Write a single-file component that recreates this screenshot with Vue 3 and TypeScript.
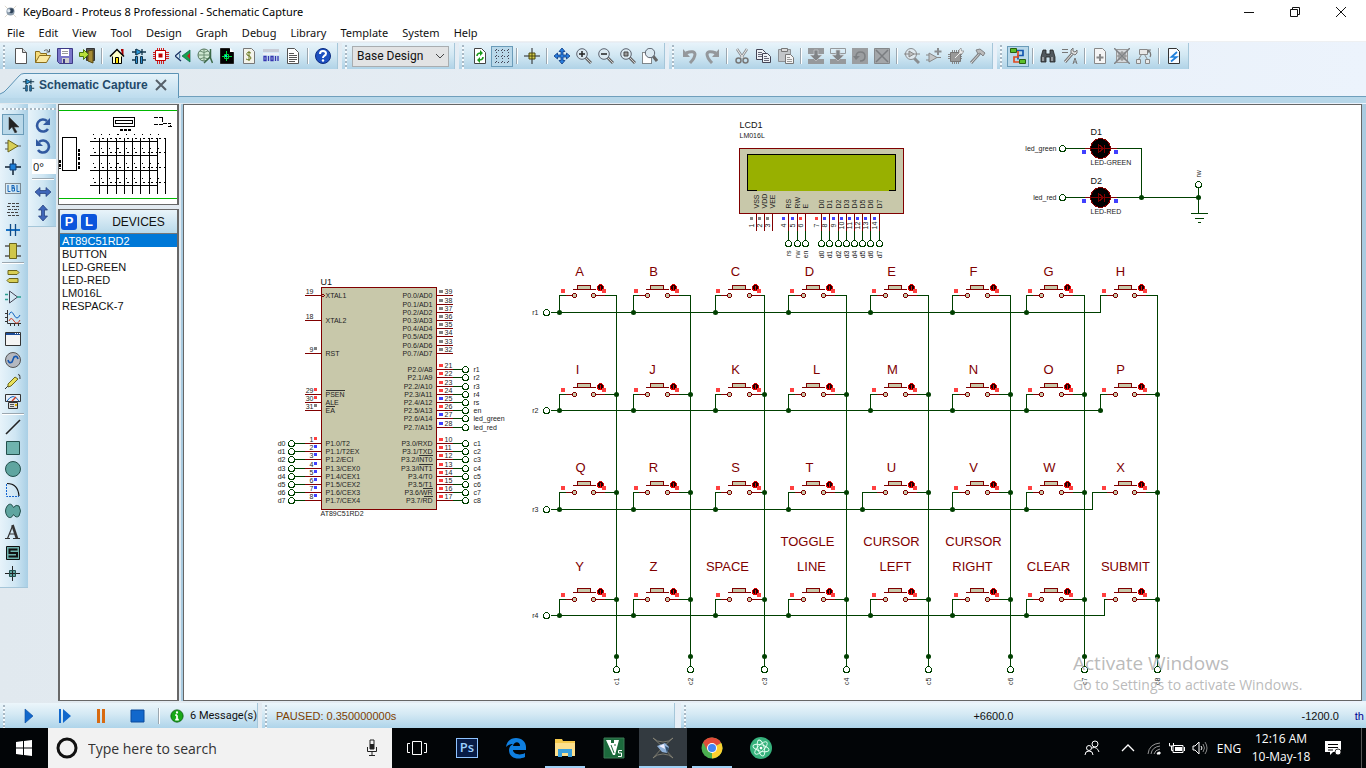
<script setup lang="ts">
import { ref } from 'vue'

type Tool = { id: string; label: string; on?: boolean } | 'sep'

const icons: Record<string, string> = {
  new: '<path d="M2.500 .5h7l4 4v11h-11z" fill="#fff" stroke="#555"/><path d="M9.500 .5v4h4" fill="#ddd" stroke="#555"/>',
  open: '<path d="M.5 14.500v-11h4l1 2h6v3" fill="#f6dc7a" stroke="#8a6d1c"/><path d="M.5 14.500l4-7h11l-4 7z" fill="#fbe9a0" stroke="#8a6d1c"/><path d="M9 3c2-2 4-1 5 1M14.500 1v3h-3" fill="none" stroke="#555"/>',
  save: '<path d="M.5 .5h15v15h-13l-2-2z" fill="#7a76c8" stroke="#3d3a86"/><path d="M4 1h8v7H4z" fill="#fff"/><path d="M5 3.500h6M5 5.500h6" stroke="#9a9a9a"/><path d="M5 10h7v5H5z" fill="#ccc"/><path d="M6 11h2v4H6z" fill="#3d3a86"/>',
  exit: '<path d="M7.500 .5h8v12h-8z" fill="#555" stroke="#333"/><path d="M9 3l5-1v13l-5-2z" fill="#a58b35" stroke="#54460f"/><path d="M.5 4.500h4V1.500l5 5-5 5V8.500h-4z" fill="#b8e03c" stroke="#4a7a12"/>',
  home: '<path d="M3.500 8v7.500h9V8" fill="#ffffc8" stroke="#000"/><path d="M12 2h1.500v5" stroke="#a00" stroke-width="2" fill="none"/><path d="M1 8.500l7-7 7 7" fill="#ffffc8" stroke="#000" stroke-width="1.500"/><path d="M6.500 9.500h3v6h-3z" fill="#ffe000" stroke="#000"/>',
  schem: '<path d="M1 4h14M5 1v6M11 1v6" stroke="#12354a" stroke-width="1.300"/><path d="M5 1l6 3-6 3z" fill="#2a9bdc" stroke="#12354a"/><path d="M1 12h3M12 12h3" stroke="#12354a" stroke-width="1.300"/><path d="M4.500 8.500h2v7h-2zM9.500 8.500h2v7h-2z" fill="#2a8bd0" stroke="#12354a"/>',
  chip: '<path d="M4.500 0v16M6.500 0v16M8.500 0v16M10.500 0v16M0 4.500h16M0 6.500h16M0 8.500h16M0 10.500h16" stroke="#d02020"/><path d="M2.500 2.500h10v10h-10z" fill="#fff" stroke="#c00000"/><path d="M5.500 5.500h4v4h-4z" fill="#c00000"/>',
  view3d: '<path d="M15 2v12L7 8z" fill="#18a050" stroke="#064" stroke-width=".7"/><path d="M15 5v6l-3-3z" fill="#c02020"/><path d="M0 8l6-5M0 8l6 5" stroke="#1a2f60" stroke-width="1.300" fill="none"/><path d="M4 4.500q3 3.500 0 7z" fill="#5585aa"/>',
  globe: '<circle cx="7" cy="7" r="6" fill="#cfe8d2" stroke="#52735a"/><path d="M7 1v12M1 7h12M3 3q4 3 8 0M3 11q4-3 8 0" fill="none" stroke="#6c8f74"/><path d="M13.500 1v9l2 5M13 9l-6 6" stroke="#3c6a48" stroke-width="1.500" fill="none"/>',
  gerber: '<path d="M1.500 .5h9l4 4v11h-13z" fill="#000" stroke="#222"/><path d="M11 0v4h4z" fill="#fff"/><path d="M7.500 3v10M3 8.500h10M5.500 6.500h4v4h-4z" stroke="#00d840" fill="none"/><path d="M6 7h2v2H6z" fill="#00e0e0"/>',
  bill: '<path d="M2.500 .5h8l3 3v12h-11z" fill="#f3f3ea" stroke="#777"/><path d="M10 5Q5 3 6 7q4 1 4 3-1 3-5 1M8 3v10" fill="none" stroke="#6a7a20"/>',
  bits: '<path d="M0 1h16v3H0z" fill="#c8ccd6"/><path d="M0 5h16v2H0z" fill="#eef0f6"/><path d="M1 8.500h2v4H1zM5.500 13V8M8 8.500h2v4H8zM12.500 13V8M15 8v5" fill="none" stroke="#3434b0" stroke-width="1.300"/>',
  doc: '<path d="M2.500 .5h7l4 4v11h-11z" fill="#fff" stroke="#555"/><path d="M4 5.500h5M4 7.500h8M4 9.500h8M4 11.500h8M4 13.500h6" stroke="#555"/>',
  help: '<circle cx="8" cy="8" r="7.500" fill="#1e50c0" stroke="#0c2c80"/><path d="M5 6q0-3 3-3t3 2.500q0 1.500-2 2.500-1 .6-1 2" fill="none" stroke="#fff" stroke-width="2"/><circle cx="8" cy="12.500" r="1.200" fill="#fff"/>',
  refresh: '<path d="M2.500 .5h7l4 4v11h-11z" fill="#fff" stroke="#444"/><path d="M5 8q0-3 4-3M11 9q0 3-4 3" fill="none" stroke="#1a9a1a" stroke-width="1.600"/><path d="M8 2l3 3-3 3zM8 9l-3 3 3 3z" fill="#1a9a1a"/>',
  grid: '<path d="M1 2.500h15M1 8.500h15M1 14.500h15M2.500 1v15M8.500 1v15M14.500 1v15" stroke="#445" stroke-dasharray="1 2"/>',
  origin: '<path d="M8 0v16M0 8h16" stroke="#222"/><path d="M5 5h6v6H5z" fill="#d4cc4a" stroke="#4a4610"/><path d="M8 5v6M5 8h6" stroke="#4a4610"/>',
  pan: '<path d="M8 0l3 3.500H9V7h3.500V5L16 8l-3.500 3V9H9v3.500h2L8 16l-3-3.500h2V9H3.500v2L0 8l3.500-3v2H7V3.500H5z" fill="#2a7fe0" stroke="#0a3880" stroke-width=".8"/>',
  zin: '<path d="M9 9l6 6" stroke="#666" stroke-width="3"/><path d="M9 9l6 6" stroke="#ccc"/><circle cx="6" cy="6" r="5.300" fill="#dbe9f1" stroke="#5c6470"/><path d="M3 6h6M6 3v6" stroke="#222" stroke-width="1.500"/>',
  zout: '<path d="M9 9l6 6" stroke="#666" stroke-width="3"/><path d="M9 9l6 6" stroke="#ccc"/><circle cx="6" cy="6" r="5.300" fill="#dbe9f1" stroke="#5c6470"/><path d="M3 6h6" stroke="#222" stroke-width="1.500"/>',
  zall: '<path d="M9 9l6 6" stroke="#666" stroke-width="3"/><path d="M9 9l6 6" stroke="#ccc"/><circle cx="6" cy="6" r="5.300" fill="#dbe9f1" stroke="#5c6470"/><path d="M4 4h4v4H4z" fill="#999" stroke="#444"/>',
  zarea: '<path d="M.5 4.500h9v11h-9z" fill="#fff" stroke="#222" stroke-dasharray="1 1"/><path d="M11 8l4 5" stroke="#666" stroke-width="3"/><circle cx="8" cy="5" r="4.700" fill="#dbe9f1" stroke="#5c6470"/>',
  undo: '<path d="M4 5q8-3 9 1 0 4-5 9" fill="none" stroke="#94989c" stroke-width="3"/><path d="M1 1v8h7z" fill="#94989c"/>',
  redo: '<path d="M12 5Q4 2 3 6q0 4 5 9" fill="none" stroke="#94989c" stroke-width="3"/><path d="M15 1v8H8z" fill="#94989c"/>',
  cut: '<path d="M3 1l6 9M13 1L7 10" stroke="#8a8d90" stroke-width="2.500"/><path d="M3 1l6 9M13 1L7 10" stroke="#eee"/><circle cx="4.500" cy="12.500" r="2.500" fill="none" stroke="#777" stroke-width="1.500"/><circle cx="11.500" cy="12.500" r="2.500" fill="none" stroke="#777" stroke-width="1.500"/>',
  copy: '<path d="M.5 1.500h6l3 3v7h-9z" fill="#eef2f6" stroke="#445"/><path d="M2 4.500h4M2 6.500h5M2 8.500h5" stroke="#667"/><path d="M6.500 5.500h5l3 3v6h-8z" fill="#eef2f6" stroke="#445"/><path d="M8 8.500h3M8 10.500h5M8 12.500h5" stroke="#667"/>',
  paste: '<path d="M.5 1.500h12v12H.5z" fill="#c3c6c9" stroke="#8d9195"/><path d="M3.500 .5h6v3h-6z" fill="#ddd" stroke="#777"/><path d="M7.500 6.500h5l3 3v6h-8z" fill="#f4f4f4" stroke="#777"/><path d="M9 9.500h3M9 11.500h5M9 13.500h5" stroke="#999"/>',
  bcopy: '<path d="M0 0h16v6H0zM0 11h16v5H0z" fill="#96999c"/><path d="M6 2h4v5h4l-6 6-6-6h4z" fill="#808386" stroke="#c8cbce" stroke-width=".7"/>',
  bmove: '<path d="M.5 .5h15v5H.5z" fill="none" stroke="#96999c"/><path d="M0 11h16v5H0z" fill="#96999c"/><path d="M6 2h4v5h4l-6 6-6-6h4z" fill="#808386" stroke="#c8cbce" stroke-width=".7"/>',
  brot: '<path d="M0 0h16v16H0z" fill="#9b9ea1"/><path d="M4 9q0-5 4.500-5T13 8.500 8 13" fill="none" stroke="#7d8083" stroke-width="1.500"/><path d="M1 8h7l-4 4z" fill="#7d8083"/>',
  bdel: '<path d="M.5 .5h15v15H.5z" fill="#a3a6a9" stroke="#85888b"/><path d="M2 2l12 12M14 2L2 14" stroke="#7a7d80" stroke-width="1.500"/>',
  pick: '<path d="M9 9l6 6" stroke="#8a8d90" stroke-width="3"/><circle cx="7" cy="6" r="5.500" fill="#dfe8ee" stroke="#8a8d90"/><path d="M5 3l5 3-5 3zM0 6h5M10 6h6" fill="#bbb" stroke="#888"/>',
  makedev: '<path d="M3 5l8 4.500L3 14zM0 7h3M0 12h3M11 9.500h4" fill="#c3c6c8" stroke="#888"/><path d="M12 0v7M8.500 3.500h7" stroke="#8a8d90" stroke-width="2"/>',
  pack: '<path d="M0 6.500h14M0 8.500h14M0 10.500h14M4.500 2v14M6.500 2v14M8.500 2v14M10.500 2v14" stroke="#888"/><path d="M2.500 4.500h10v9h-10z" fill="#999" stroke="#777"/><path d="M6 10l5-5V2l2-2 .5 3L16 3l-2 3h-2l-5 5z" fill="#eee" stroke="#888" stroke-width=".7"/>',
  hammer: '<path d="M1 15l9-10" stroke="#808386" stroke-width="3"/><path d="M1 15l9-10" stroke="#ddd"/><path d="M6 2l4-1 5 4-2 3-3-3-2 1z" fill="#bbb" stroke="#808386"/>',
  wires: '<path d="M7 2.500h6v5H8v4" stroke="#1557b0" stroke-width="1.700" fill="none"/><path d="M9 14H4V9h4V3" stroke="#e04a20" stroke-width="1.700" fill="none"/><path d="M.5 .5h6v4h-6zM9.500 11.500h6v4h-6z" fill="#5cc02a" stroke="#286010"/>',
  binoc: '<path d="M3 2h3v4h4V2h3l2 7v5h-5V9H6v5H1V9z" fill="#50575c" stroke="#222" stroke-width=".8"/><path d="M3 9v4M12 9v4" stroke="#ddd"/>',
  propas: '<path d="M0 1.500h6M0 4.500h6" stroke="#777"/><path d="M3 14l7-8" stroke="#777" stroke-width="3"/><path d="M3 14l7-8" stroke="#eee"/><path d="M9 5V2l2-2v3l2 1 2-2v3l-2 2z" fill="#ddd" stroke="#777"/><path d="M11 16l2-6 2 6M11.500 14h3" fill="none" stroke="#777"/>',
  sheetadd: '<path d="M2.500 .5h8l3 3v12h-11z" fill="#f5f5f5" stroke="#888"/><path d="M8 6v7M4.500 9.500h7" stroke="#888" stroke-width="2"/>',
  sheetdel: '<path d="M2.500 1.500h11v13h-11z" fill="#d4d7da" stroke="#999"/><path d="M5 5h6v6H5zM3 8h10M8 3v10" fill="none" stroke="#888"/><path d="M0 0l16 16M16 0L0 16" stroke="#808386" stroke-width="1.500"/>',
  parent: '<path d="M3.500 1.500h8v5h-8zM.5 11.500h4v4h-4zM9.500 11.500h4v4h-4zM2.500 11.500l3-5M11.500 11.500l-3-5" fill="#e8e8e8" stroke="#888"/><path d="M12 2q4 3 2 7M12 2h3M12 2v3" fill="none" stroke="#777" stroke-width="1.200"/>',
  erc: '<path d="M2.500 .5h8l3 3v12h-11z" fill="#f8fbff" stroke="#333"/><path d="M11 4L5.500 9h5L5 13.500" fill="none" stroke="#1f80dc" stroke-width="1.700"/>',
  pointer: '<path d="M4 0v13l3-3 3 6 2-1-3-5h5z" fill="#222" stroke="#444" stroke-width=".6"/>',
  amp: '<path d="M0 5h4M0 11h4M12 8h4" stroke="#555"/><path d="M3 2l10 6-10 6z" fill="#d8cf55" stroke="#6a651c"/>',
  junction: '<path d="M8 0v16M0 8h16" stroke="#123" stroke-width="1.500"/><path d="M5 5h6v6H5z" fill="#1c7fd8" stroke="#0c3a70"/>',
  lbl: '<path d="M.5 3.500h15v10H.5z" fill="none" stroke="#333" stroke-dasharray="1 1"/><path d="M3 5v6.500h2.500M7 5v6M7 5.500h2v2.500H7h2.500v3H7M12 5v6.500h2.500" fill="none" stroke="#1565b8"/>',
  script: '<path d="M3 2.500h11M2 5.500h4M7 5.500h7M3 8.500h5M9 8.500h5M2 11.500h11M3 14.500h3M7 14.500h7" stroke="#444" stroke-dasharray="3 1"/>',
  bus: '<path d="M1 8h14" stroke="#1670c4" stroke-width="2"/><path d="M5.500 2v12M10.500 2v12" stroke="#0e4c88" stroke-width="1.300"/>',
  subckt: '<path d="M0 3h16M0 13h16" stroke="#555" stroke-width="1.500"/><path d="M4.500 .5h7v15h-7z" fill="#cfc64a" stroke="#6a651c"/>',
  terminal: '<path d="M3 2.500h9l2 2-2 2H3zM13 10.500H4l-2 2 2 2h9z" fill="#d8cf55" stroke="#6a651c"/>',
  devpin: '<path d="M4.500 2l8 6-8 6z" fill="none" stroke="#445"/><path d="M0 5.500h3M0 10.500h3M12 8h4" stroke="#2aa090" stroke-width="1.500"/>',
  graph: '<path d="M2.500 0v13.500H16M0 3.500h2M0 7.500h2M0 11.500h2M5.500 14v2M9.500 14v2M13.500 14v2" fill="none" stroke="#333"/><path d="M4 5q2-6 5 0t6 0" fill="none" stroke="#1565c0"/><path d="M4 11q2-5 5 0t6-1" fill="none" stroke="#d03a20"/>',
  pop: '<path d="M.5 1.500h15v13H.5z" fill="#f4f4f4" stroke="#333"/><path d="M1 2h14v2H1z" fill="#1c4c98"/><path d="M10 2.500h5" stroke="#fff" stroke-dasharray="1 1"/>',
  gen: '<circle cx="8" cy="8" r="7.500" fill="#b4b8c0" stroke="#555"/><path d="M3 8q1 4 4 2l2-5q3-2 4 2" fill="none" stroke="#1557b0" stroke-width="1.600"/>',
  probe: '<path d="M0 16l4-4M13 2q2-2 2 4" fill="none" stroke="#333"/><path d="M3 11l7-7 3 2-7 7-3 1z" fill="#e8e05a" stroke="#6a651c"/>',
  meter: '<path d="M.5 .5h15v7H.5z" fill="#e8eef6" stroke="#333"/><path d="M2 7q6-9 12 0" fill="none" stroke="#1565c0"/><path d="M7 7l4-4" stroke="#d03a20" stroke-width="1.500"/><path d="M3.500 8.500h9v6h-9z" fill="#ddd" stroke="#333"/><path d="M5 10.500h4M5 12.500h4" stroke="#555"/><path d="M10 10h2v2h-2z" fill="#e0b000"/>',
  line: '<path d="M1 15L15 1" stroke="#222" stroke-width="1.600"/>',
  box: '<path d="M1.500 1.500h13v13h-13z" fill="#6fb3ae" stroke="#24504c"/>',
  circle: '<circle cx="8" cy="8" r="7.500" fill="#5fa5a0" stroke="#24504c"/>',
  arc: '<path d="M1.500 2v12.500H14" fill="none" stroke="#1565d0" stroke-dasharray="2 1"/><path d="M2 1.500q11 0 12 12.500" fill="none" stroke="#111" stroke-width="1.200"/>',
  path: '<path d="M8.500 4.500Q6-1 2.500 2.500q-4 5.500 0 11 3.500 3 6-2 2.500 4 5.500 1.500 3-5 0-10-3-2-5.500 1.500z" fill="#5fa5a0" stroke="#24504c"/>',
  text: '<path d="M0 14.500h5M8 14.500h7" stroke="#333"/><path d="M2.500 14.500L7.500 2M4 10h6" stroke="#333" stroke-width="1.200"/><path d="M7.500 1l4.500 13.500" stroke="#333" stroke-width="2.600"/>',
  symbol: '<path d="M1.500 1.500h13v13h-13z" fill="#6fb3ae" stroke="#111"/><path d="M12.500 4.500H4.500V8h7.500v3.500H3.500" fill="none" stroke="#111" stroke-width="2"/>',
  marker: '<path d="M7.500 0v15M0 7.500h15" stroke="#222"/><path d="M4.500 4.500h6v6h-6z" fill="#5fa5a0" stroke="#24504c"/><path d="M7.500 5v5M5 7.500h5" stroke="#222"/>',
  cw: '<path d="M13 12a6 6 0 1 1-1-8" fill="none" stroke="#3159a0" stroke-width="2.600"/><path d="M15 1v7H8z" fill="#3159a0"/>',
  ccw: '<path d="M3 12a6 6 0 1 0 1-8" fill="none" stroke="#3159a0" stroke-width="2.600"/><path d="M1 1v7h7z" fill="#3159a0"/>',
  fliph: '<path d="M0 8l5-4.500v3h6v-3L16 8l-5 4.500v-3H5v3z" fill="#3f66b8" stroke="#1c3876" stroke-width=".7"/>',
  flipv: '<path d="M8 0l4.500 5h-3v6h3L8 16l-4.500-5h3V5h-3z" fill="#3f66b8" stroke="#1c3876" stroke-width=".7"/>',
  play: '<path d="M4 1l8 7-8 7z" fill="#1268cc" stroke="#0a4a9c" stroke-width=".6"/>',
  step: '<path d="M2 1h2v14H2zM6 1l8 7-8 7z" fill="#1268cc"/>',
  pause: '<path d="M4 1h3v14H4zM9 1h3v14H9z" fill="#d86a10"/>',
  stop: '<path d="M2 2h13v12H2z" fill="#1268cc" stroke="#0a4a9c"/>',
  info: '<circle cx="8" cy="8" r="7" fill="#18a818" stroke="#0a6010"/><path d="M8 7v5M6 7h2M6 12h4" stroke="#fff" stroke-width="2"/><circle cx="8" cy="4" r="1.300" fill="#fff"/>',
}

const bars: Tool[][] = [
  [
    { id: 'new', label: 'New Project' }, { id: 'open', label: 'Open Project' }, { id: 'save', label: 'Save Project' }, { id: 'exit', label: 'Close Project' }, 'sep',
    { id: 'home', label: 'Home Page' }, { id: 'schem', label: 'Schematic Capture' }, { id: 'chip', label: 'PCB Layout' }, { id: 'view3d', label: '3D Visualizer' },
    { id: 'globe', label: 'Design Explorer' }, { id: 'gerber', label: 'Gerber Viewer' }, { id: 'bill', label: 'Bill of Materials' }, { id: 'bits', label: 'Source Code' }, { id: 'doc', label: 'Project Notes' }, 'sep',
    { id: 'help', label: 'Help' },
  ],
  [
    { id: 'refresh', label: 'Redraw' }, { id: 'grid', label: 'Toggle Grid', on: true }, 'sep', { id: 'origin', label: 'Origin' }, 'sep',
    { id: 'pan', label: 'Center At Cursor' }, { id: 'zin', label: 'Zoom In' }, { id: 'zout', label: 'Zoom Out' }, { id: 'zall', label: 'Zoom All' }, { id: 'zarea', label: 'Zoom Area' },
  ],
  [
    { id: 'undo', label: 'Undo' }, { id: 'redo', label: 'Redo' }, 'sep', { id: 'cut', label: 'Cut' }, { id: 'copy', label: 'Copy' }, { id: 'paste', label: 'Paste' }, 'sep',
    { id: 'bcopy', label: 'Block Copy' }, { id: 'bmove', label: 'Block Move' }, { id: 'brot', label: 'Block Rotate' }, { id: 'bdel', label: 'Block Delete' }, 'sep',
    { id: 'pick', label: 'Pick Parts' }, { id: 'makedev', label: 'Make Device' }, { id: 'pack', label: 'Packaging Tool' }, { id: 'hammer', label: 'Decompose' },
  ],
  [
    { id: 'wires', label: 'Wire Autorouter', on: true }, 'sep', { id: 'binoc', label: 'Search' }, { id: 'propas', label: 'Property Assignment' }, 'sep',
    { id: 'sheetadd', label: 'New Sheet' }, { id: 'sheetdel', label: 'Remove Sheet' }, { id: 'parent', label: 'Exit to Parent' }, 'sep', { id: 'erc', label: 'Electrical Rules Check' },
  ],
]

const modes: Tool[] = [
  { id: 'pointer', label: 'Selection', on: true }, { id: 'amp', label: 'Component' }, { id: 'junction', label: 'Junction Dot' }, { id: 'lbl', label: 'Wire Label' },
  { id: 'script', label: 'Text Script' }, { id: 'bus', label: 'Bus' }, { id: 'subckt', label: 'Subcircuit' }, 'sep',
  { id: 'terminal', label: 'Terminals' }, { id: 'devpin', label: 'Device Pins' }, { id: 'graph', label: 'Graph' }, { id: 'pop', label: 'Active Popup' },
  { id: 'gen', label: 'Generator' }, { id: 'probe', label: 'Probe' }, { id: 'meter', label: 'Instruments' }, 'sep',
  { id: 'line', label: '2D Line' }, { id: 'box', label: '2D Box' }, { id: 'circle', label: '2D Circle' }, { id: 'arc', label: '2D Arc' },
  { id: 'path', label: '2D Path' }, { id: 'text', label: '2D Text' }, { id: 'symbol', label: '2D Symbol' }, { id: 'marker', label: '2D Marker' },
]

const menus = ['File', 'Edit', 'View', 'Tool', 'Design', 'Graph', 'Debug', 'Library', 'Template', 'System', 'Help']
const devices = ['AT89C51RD2', 'BUTTON', 'LED-GREEN', 'LED-RED', 'LM016L', 'RESPACK-7']
const selected = ref('AT89C51RD2')
const angle = ref('0°')
const runControls = [
  { id: 'play', label: 'Run' }, { id: 'step', label: 'Step' }, { id: 'pause', label: 'Pause' }, { id: 'stop', label: 'Stop' },
]

const RED = '#ff4040'
const BLUE = '#4040ff'
const GREY = '#808080'

/* Microcontroller pins */
type Pin = { y: number; n: string; name: string; c?: string; net?: string; bar?: number }
const busY = [443, 451, 459, 468, 476, 484, 492, 500]
const leftPins: Pin[] = [
  { y: 295, n: '19', name: 'XTAL1' }, { y: 320, n: '18', name: 'XTAL2' }, { y: 353, n: '9', name: 'RST', c: GREY },
  { y: 394, n: '29', name: 'PSEN', c: RED, bar: 344 }, { y: 402, n: '30', name: 'ALE', c: RED }, { y: 410, n: '31', name: 'EA', c: GREY, bar: 334 },
  ...['T2', 'T2EX', 'ECI', 'CEX0', 'CEX1', 'CEX2', 'CEX3', 'CEX4'].map((f, i) => ({
    y: busY[i], n: String(i + 1), name: `P1.${i}/${f}`, c: i === 0 ? RED : BLUE, net: `d${i}`,
  })),
]
const rightPins: Pin[] = [
  ...[295, 304, 312, 320, 328, 336, 345, 353].map((y, i) => ({ y, n: String(39 - i), name: `P0.${i}/AD${i}`, c: GREY })),
  ...[369, 377, 386, 394, 402, 410, 418, 427].map((y, i) => ({
    y, n: String(21 + i), name: `P2.${i}/A${8 + i}`, c: [4, 6, 7].includes(i) ? BLUE : RED,
    net: ['r1', 'r2', 'r3', 'r4', 'rs', 'en', 'led_green', 'led_red'][i],
  })),
  ...['RXD', 'TXD', 'INT0', 'INT1', 'T0', 'T1', 'WR', 'RD'].map((f, i) => ({
    y: busY[i], n: String(10 + i), name: `P3.${i}/${f}`, c: RED, net: `c${i + 1}`,
    bar: [0, 0, 418, 418, 0, 0, 422, 423][i] || undefined,
  })),
]

/* Display pins */
const lcdPins = [
  [756, 'VSS', GREY, ''], [764, 'VDD', GREY, ''], [772, 'VEE', GREY, ''],
  [788, 'RS', BLUE, 'rs'], [797, 'RW', BLUE, 'rw'], [805, 'E', RED, 'en'],
  [821, 'D0', RED, 'd0'], [829, 'D1', BLUE, 'd1'], [838, 'D2', BLUE, 'd2'], [846, 'D3', BLUE, 'd3'],
  [854, 'D4', BLUE, 'd4'], [862, 'D5', BLUE, 'd5'], [870, 'D6', BLUE, 'd6'], [879, 'D7', BLUE, 'd7'],
].map(([x, name, c, net], i) => ({ x: x as number, name: name as string, c: c as string, net: net as string, n: i + 1 }))

const leds = [
  { y: 148, ref: 'D1', part: 'LED-GREEN', net: 'led_green' },
  { y: 197, ref: 'D2', part: 'LED-RED', net: 'led_red' },
]

/* Key matrix */
const cols = [
  { j: 559, a: 574, b: 593, v: 616 }, { j: 633, a: 647, b: 667, v: 690 }, { j: 715, a: 729, b: 749, v: 764 }, { j: 788, a: 803, b: 823, v: 846 },
  { j: 870, a: 885, b: 905, v: 928 }, { j: 952, a: 967, b: 987, v: 1010 }, { j: 1026, a: 1041, b: 1061, v: 1084 }, { j: 1100, a: 1115, b: 1134, v: 1157 },
]
const rows = [
  { y: 295, bus: 312, cap: 6, end: 1100, base: 275 },
  { y: 394, bus: 410, cap: 7, end: 1100, base: 373 },
  { y: 492, bus: 509, cap: 7, end: 1092, base: 471 },
  { y: 599, bus: 615, cap: 7, end: 1104, base: 570 },
]
const keyText = [
  ['A', 'B', 'C', 'D', 'E', 'F', 'G', 'H'],
  ['I', 'J', 'K', 'L', 'M', 'N', 'O', 'P'],
  ['Q', 'R', 'S', 'T', 'U', 'V', 'W', 'X'],
  ['Y', 'Z', 'SPACE', 'LINE', 'LEFT', 'RIGHT', 'CLEAR', 'SUBMIT'],
]
const keyX = [
  [579, 653, 735, 809, 891, 973, 1048, 1120],
  [577, 652, 735, 816, 892, 973, 1048, 1120],
  [580, 653, 735, 809, 891, 973, 1049, 1120],
  [579, 653, 727, 811, 895, 972, 1048, 1125],
]
const keys = rows.flatMap((r, ri) => cols.map((c, ci) => {
  let j = ci === 7 ? r.end : c.j
  if (ri === 2 && ci === 4) j = 862
  return { ...c, ...r, j, text: keyText[ri][ci], tx: keyX[ri][ci], dot: ci < 7 || ri === 1, cross: ri > 0, id: `${ri}-${ci}` }
}))
const upperText = [{ x: 807, t: 'TOGGLE' }, { x: 891, t: 'CURSOR' }, { x: 973, t: 'CURSOR' }]

const miniCols = [100, 108, 117, 124, 132, 140, 149, 157, 165]
const miniRows = [141, 155, 170, 185]
</script>

<template>
  <div class="app">
    <header class="title">
      <svg class="logo" viewBox="0 0 16 16"><path d="M1 1l14 14M15 1L1 15" stroke="#d8d0c0" /><circle cx="8" cy="8" r="5" fill="#8c9cac" /><circle cx="9" cy="7" r="3" fill="#2e4258" /><circle cx="6" cy="7" r="2" fill="#dfe8f0" /></svg>
      <h1>KeyBoard - Proteus 8 Professional - Schematic Capture</h1>
      <div class="winbtns">
        <button aria-label="Minimize"><svg viewBox="0 0 12 12"><path d="M1 6.500h10" /></svg></button>
        <button aria-label="Restore"><svg viewBox="0 0 12 12"><path d="M1.500 3.500h7v7h-7zM3.500 3.500v-2h7v7h-2" /></svg></button>
        <button aria-label="Close"><svg viewBox="0 0 12 12"><path d="M1 1l10 10M11 1L1 11" /></svg></button>
      </div>
    </header>

    <nav class="menu"><button v-for="m in menus" :key="m">{{ m }}</button></nav>

    <div class="bars">
      <template v-for="(bar, bi) in bars" :key="bi">
        <div v-if="bi === 1" class="bar combo">
          <select aria-label="Design variant"><option>Base Design</option></select>
          <svg viewBox="0 0 10 6"><path d="M1 1l4 4 4-4" fill="none" stroke="#444" /></svg>
        </div>
        <div class="bar">
          <template v-for="(t, i) in bar" :key="i">
            <span v-if="t === 'sep'" class="sep"></span>
            <button v-else class="tool" :class="{ on: t.on }" :aria-label="t.label"><svg viewBox="0 0 16 16" v-html="icons[t.id]"></svg></button>
          </template>
        </div>
      </template>
    </div>

    <div class="tabs">
      <svg class="tabshape" viewBox="0 0 179 25"><path d="M0 25L0 21Q4 20 8 15L19 3Q21 .5 24 .5H178.500V25z" fill="url(#tabfill)" /><path d="M0 21Q4 20 8 15L19 3Q21 .5 24 .5H178.500V25" fill="none" stroke="#5b93b5" /><defs><linearGradient id="tabfill" x1="0" y1="0" x2="0" y2="1"><stop offset="0" stop-color="#e6f3fa" /><stop offset="1" stop-color="#bddcee" /></linearGradient></defs></svg>
      <div class="tab">
        <svg class="tabicon" viewBox="0 0 16 16" v-html="icons.schem"></svg>
        <button class="tabname">Schematic Capture</button>
        <button class="tabclose" aria-label="Close tab"><svg viewBox="0 0 12 12"><path d="M1 1l10 10M11 1L1 11" stroke="#56606a" stroke-width="2" /></svg></button>
      </div>
    </div>

    <main class="work">
      <div class="vbar modes">
        <template v-for="(t, i) in modes" :key="i">
          <span v-if="t === 'sep'" class="vsep"></span>
          <button v-else class="tool" :class="{ on: t.on }" :aria-label="t.label"><svg viewBox="0 0 16 16" v-html="icons[t.id]"></svg></button>
        </template>
      </div>
      <div class="vbar orient">
        <button class="tool" aria-label="Rotate clockwise"><svg viewBox="0 0 16 16" v-html="icons.cw"></svg></button>
        <button class="tool" aria-label="Rotate anti-clockwise"><svg viewBox="0 0 16 16" v-html="icons.ccw"></svg></button>
        <input v-model="angle" aria-label="Rotation angle">
        <span class="vsep"></span>
        <button class="tool" aria-label="Mirror X"><svg viewBox="0 0 16 16" v-html="icons.fliph"></svg></button>
        <button class="tool" aria-label="Mirror Y"><svg viewBox="0 0 16 16" v-html="icons.flipv"></svg></button>
      </div>

      <aside class="side">
        <div class="overview">
          <svg viewBox="60 106 117 97" shape-rendering="crispEdges">
            <path d="M60 110.500h117M60 198.500h117" stroke="#00b800" />
            <g fill="none" stroke="#000">
              <path d="M63.500 137.500h14v33h-14zM114.500 117.500h20v9h-20zM116.500 120.500h16v3h-16z" />
              <path d="M80 149v11M80 162v8M61 160v9" stroke-width="2" stroke-dasharray="3 1" />
              <path d="M120 130h12" stroke-width="2" stroke-dasharray="3 1" />
              <path d="M154 117.500h9v6h8v4M154 124.500h9M168 126.500h5" stroke-dasharray="4 1" />
              <path v-for="y in miniRows" :key="y" :d="`M91 ${y + .5}h66`" />
              <path v-for="x in miniCols" :key="x" :d="`M${x + .5} 138v56`" />
              <path v-for="y in miniRows" :key="'k' + y" :d="`M95 ${y - 2.5}h70`" stroke-dasharray="2 3 1 2" />
              <path v-for="y in miniRows" :key="'d' + y" :d="`M94 ${y - 6.5}h70`" stroke-dasharray="1 7" />
            </g>
          </svg>
        </div>
        <div class="devices">
          <div class="devhead"><button>P</button><button>L</button><h2>DEVICES</h2></div>
          <ul><li v-for="d in devices" :key="d"><button :class="{ sel: d === selected }" @click="selected = d">{{ d }}</button></li></ul>
        </div>
      </aside>

      <section class="canvas">
        <svg class="sheet" shape-rendering="crispEdges">
          <g transform="translate(-183.500 -104.500)">
            <!-- key matrix wiring -->
            <g class="wire">
              <path v-for="c in cols" :key="c.v" :d="`M${c.v} 295V666`" />
              <path v-for="r in rows" :key="r.bus" :d="`M550 ${r.bus}H${r.end}`" />
            </g>
            <g v-for="k in keys" :key="k.id">
              <path class="wire" :d="`M${k.j} ${k.bus}V${k.y}H${k.a - 9}M${k.b + 11} ${k.y}H${k.v}`" />
              <path class="pin" :d="`M${k.a - 9} ${k.y}H${k.a}M${k.b} ${k.y}h11M${k.a - 2} ${k.y - k.cap}h23`" />
              <rect class="body" :x="k.a + 3" :y="k.y - k.cap - 4" width="13" height="4" />
              <circle class="body" :cx="k.a" :cy="k.y" r="2" /><circle class="body" :cx="k.b" :cy="k.y" r="2" />
              <circle :cx="k.a + 26" :cy="k.y - 8" r="3" fill="#200000" stroke="#e00000" />
              <path :d="`M${k.a + 26} ${k.y - 10}v4`" stroke="#f00000" />
              <rect :x="k.a - 13.5" :y="k.y - 6.5" width="4" height="4" :fill="RED" />
              <rect :x="k.a + 27.5" :y="k.y - 6.5" width="4" height="4" :fill="RED" />
              <circle v-if="k.dot" class="dot" :cx="k.j" :cy="k.bus" r="2.500" />
              <circle v-if="k.cross" class="dot" :cx="k.v" :cy="k.y" r="2.500" />
              <text class="big" :x="k.tx" :y="k.base">{{ k.text }}</text>
            </g>
            <text v-for="u in upperText" :key="u.x" class="big" :x="u.x" y="545">{{ u.t }}</text>
            <g v-for="(r, i) in rows" :key="'t' + i">
              <circle class="term" cx="546" :cy="r.bus" r="3" />
              <text class="small" x="538" :y="r.bus + 2" text-anchor="end">r{{ i + 1 }}</text>
            </g>
            <g v-for="(c, i) in cols" :key="'c' + i">
              <circle class="dot" :cx="c.v" cy="656" r="2.500" />
              <circle class="term" :cx="c.v" cy="669" r="3" />
              <text class="small" :transform="`translate(${c.v + 2} 677) rotate(-90)`" text-anchor="end">c{{ i + 1 }}</text>
            </g>

            <!-- microcontroller -->
            <rect class="body" x="321" y="287" width="115" height="222" />
            <text class="mid" x="320" y="284">U1</text>
            <text class="small" x="320" y="515">AT89C51RD2</text>
            <path class="pin" d="M321 293l3 2-3 2" />
            <g v-for="p in leftPins" :key="'l' + p.n">
              <path class="pin" :d="`M304 ${p.y}H321`" />
              <text class="small" x="313" :y="p.y - 2" text-anchor="end">{{ p.n }}</text>
              <text class="small" x="325" :y="p.y + 2">{{ p.name }}</text>
              <rect v-if="p.c" x="313.500" :y="p.y - 6.500" width="3" height="3" :fill="p.c" />
              <path v-if="p.bar" class="over" :d="`M325 ${p.y - 4}H${p.bar}`" />
              <template v-if="p.net">
                <path class="wire" :d="`M294 ${p.y}H304`" /><circle class="term" cx="291" :cy="p.y" r="3" />
                <text class="small" x="285" :y="p.y + 2" text-anchor="end">{{ p.net }}</text>
              </template>
            </g>
            <g v-for="p in rightPins" :key="'r' + p.n">
              <path class="pin" :d="`M436 ${p.y}H452`" />
              <text class="small" x="444" :y="p.y - 2">{{ p.n }}</text>
              <text class="small" x="432" :y="p.y + 2" text-anchor="end">{{ p.name }}</text>
              <rect x="438.500" :y="p.y - 5.500" width="4" height="3" :fill="p.c" />
              <path v-if="p.bar" class="over" :d="`M${p.bar} ${p.y - 4}H432`" />
              <template v-if="p.net">
                <path class="wire" :d="`M452 ${p.y}H462`" /><circle class="term" cx="465" :cy="p.y" r="3" />
                <text class="small" x="473" :y="p.y + 2">{{ p.net }}</text>
              </template>
            </g>

            <!-- display -->
            <text class="mid" x="739" y="127">LCD1</text>
            <text class="small" x="739" y="137">LM016L</text>
            <rect class="body" x="739" y="148" width="164" height="65" />
            <rect x="747" y="154" width="148" height="36" fill="#98b000" />
            <path d="M756 190H747V154H895V190H888" fill="none" stroke="#000" />
            <g v-for="p in lcdPins" :key="p.x">
              <path class="pin" :d="`M${p.x} 213V230`" />
              <rect :x="p.x - 6.500" y="216.500" width="3" height="3" :fill="p.c" />
              <text class="small" :transform="`translate(${p.x + 2} 208) rotate(-90)`">{{ p.name }}</text>
              <text class="small" :transform="`translate(${p.x - 3} 225) rotate(-90)`" text-anchor="middle">{{ p.n }}</text>
              <template v-if="p.net">
                <path class="wire" :d="`M${p.x} 230V240`" /><circle class="term" :cx="p.x" cy="243" r="3" />
                <text class="small" :transform="`translate(${p.x + 2} 250) rotate(-90)`" text-anchor="end">{{ p.net }}</text>
              </template>
            </g>

            <!-- indicators and ground -->
            <g v-for="d in leds" :key="d.ref">
              <path class="wire" :d="`M1065 ${d.y}H1084M1116 ${d.y}H1141`" />
              <path class="pin" :d="`M1084 ${d.y}H1116`" />
              <circle class="term" cx="1062" :cy="d.y" r="3" />
              <circle cx="1100" :cy="d.y" r="10" fill="#000" stroke="#800000" />
              <path class="pin" :d="`M1090 ${d.y}H1110M1098 ${d.y - 4}v8l5-4zM1104 ${d.y - 4}v8`" />
              <rect x="1081.500" :y="d.y + 1.500" width="4" height="4" :fill="BLUE" /><rect x="1113.500" :y="d.y + 1.500" width="4" height="4" :fill="BLUE" />
              <text class="mid" x="1090" :y="d.y - 14">{{ d.ref }}</text>
              <text class="small" x="1090" :y="d.y + 16">{{ d.part }}</text>
              <text class="small" x="1056" :y="d.y + 2" text-anchor="end">{{ d.net }}</text>
            </g>
            <path class="wire" d="M1141 148V197H1198M1198 187V213M1190 213h17M1194 218h9M1197 222h3" />
            <circle class="term" cx="1198" cy="184" r="3" />
            <circle class="dot" cx="1141" cy="197" r="2.500" /><circle class="dot" cx="1198" cy="197" r="2.500" />
            <text class="small" transform="translate(1200 177) rotate(-90)">rw</text>
          </g>
        </svg>
        <div class="watermark"><strong>Activate Windows</strong><span>Go to Settings to activate Windows.</span></div>
      </section>
    </main>

    <footer class="status">
      <div class="cell runs">
        <button v-for="r in runControls" :key="r.id" :aria-label="r.label"><svg viewBox="0 0 16 16" v-html="icons[r.id]"></svg></button>
        <span class="sep"></span>
        <button class="msgs"><svg viewBox="0 0 16 16" v-html="icons.info"></svg>6 Message(s)</button>
      </div>
      <div class="cell paused">PAUSED: 0.350000000s</div>
      <div class="cell coords"><span>+6600.0</span><span>-1200.0</span><em>th</em></div>
    </footer>

    <footer class="taskbar">
      <button class="start" aria-label="Start"><svg viewBox="0 0 16 16"><path d="M0 2l7-1v6.500H0zM8 1l8-1v7.500H8zM0 8.500h7V15l-7-1zM8 8.500h8V16l-8-1z" fill="#fff" /></svg></button>
      <label class="search">
        <svg class="ring" viewBox="0 0 22 22"><circle cx="11" cy="11" r="9" fill="none" stroke="#111" stroke-width="3" /></svg>
        <input type="text" placeholder="Type here to search" aria-label="Search">
        <svg class="mic" viewBox="0 0 12 18"><path d="M4 1h4v9H4z" fill="none" stroke="#222" /><path d="M4 5h4v5H4z" fill="#222" /><path d="M1.500 8v4.500h9V8M6 12.500V16M3 16.500h6" fill="none" stroke="#222" /></svg>
      </label>
      <div class="apps">
        <button class="tv" aria-label="Task View"><svg viewBox="0 0 22 22"><path d="M6.500 4.500h9v13h-9zM4 6.500H1.500v9H4M18 6.500h2.500v9H18" fill="none" stroke="#fff" /></svg></button>
        <button aria-label="Photoshop" class="ps"><span>Ps</span></button>
        <button aria-label="Edge"><svg viewBox="0 0 22 22"><path d="M1 10C2 3 7 1 11 1c6 0 10 4 10 9v3H8c0 4 7 6 12 3v4C14 23 4 22 4 13c0-3 2-5 4-6-4 0-6 2-7 3zM8 9h7c0-5-6-5-7 0z" fill="#0f7fe0" /></svg></button>
        <button aria-label="File Explorer" class="run"><svg viewBox="0 0 22 22"><path d="M1 2h7l1 2h12v15H1z" fill="#f5c94c" /><path d="M1 6h20v13H1z" fill="#fde08c" /><path d="M4 20v-8h14v8h-4v-4H8v4z" fill="#3aa0dc" /></svg></button>
        <button aria-label="Keil uVision"><svg viewBox="0 0 22 22"><path d="M1 1h20v20H1z" fill="#1c6a3c" stroke="#3a7a54" /><path d="M3 3h5v3h3V3h5l-4 15h-2z" fill="#fff" /><path d="M8 8l3 8M13 8h-2" stroke="#1c6a3c" /><path d="M19 13.500h-3.500V16h3v3.500H15" fill="none" stroke="#fff" /></svg></button>
        <button aria-label="Proteus" class="run active"><svg viewBox="0 0 22 22"><path d="M1 1q10 8 20 20M21 1Q11 9 1 21M1 1q4 4 10 4t10-4M1 21q4-4 10-4t10 4" fill="none" stroke="#8c8878" stroke-width=".8" /><path d="M5 9l8-3 4 4-2 6-5-1z" fill="#8eb0d8" /><path d="M7 9l5-2 1 5z" fill="#eef" /><path d="M13 9l4 2-2 5z" fill="#34506e" /></svg></button>
        <button aria-label="Chrome" class="run"><svg viewBox="0 0 22 22"><circle cx="11" cy="11" r="10.500" fill="#4caf50" /><path d="M11 11L2 5.600A10.500 10.500 0 0 1 20.200 6z" fill="#e24a38" /><path d="M11 11l9.200-5A10.500 10.500 0 0 1 11 21.500z" fill="#fcd030" /><path d="M2 5.600L7 14l4-3z" fill="#e24a38" /><circle cx="11" cy="11" r="5" fill="#fff" /><circle cx="11" cy="11" r="4" fill="#4285f4" /></svg></button>
        <button aria-label="Atom"><svg viewBox="0 0 24 24"><circle cx="12" cy="12" r="12" fill="#36b27c" /><g fill="none" stroke="#e6fff2"><ellipse cx="12" cy="12" rx="9" ry="3.500" transform="rotate(15 12 12)" /><ellipse cx="12" cy="12" rx="9" ry="3.500" transform="rotate(75 12 12)" /><ellipse cx="12" cy="12" rx="9" ry="3.500" transform="rotate(135 12 12)" /></g><circle cx="12" cy="12" r="1.500" fill="#fff" /></svg></button>
      </div>
      <div class="tray">
        <button class="people" aria-label="People"><svg viewBox="0 0 16 16"><circle cx="11" cy="4" r="3" /><circle cx="5" cy="8" r="2.500" /><path d="M1 15q0-4 4-4t4 4M8 8q5-2 7 4" /></svg></button>
        <button class="chev" aria-label="Show hidden icons"><svg viewBox="0 0 16 16"><path d="M2 11l6-6 6 6" stroke-width="1.300" /></svg></button>
        <button aria-label="Network"><svg viewBox="0 0 16 16"><path d="M2 14Q3 4 14 3M5 14q1-7 9-8M8 14q1-4 6-5" stroke="#999" /><path d="M11 14q0-2 3-2v2z" fill="#fff" /></svg></button>
        <button aria-label="Battery"><svg viewBox="0 0 16 16"><path d="M4 5.500h10v7H4zM15.500 7v4M.5 3v3h4V3M2.500 6v4.500H4" /><path d="M6 7h7v4H6z" fill="#fff" stroke="none" /></svg></button>
        <button aria-label="Volume"><svg viewBox="0 0 16 16"><path d="M1 6h2l4-4v12l-4-4H1zM9 6q2 2 0 4" /><path d="M11 4q3 4 0 8M13 2q4 6 0 12" stroke="#888" /></svg></button>
        <button class="eng">ENG</button>
        <button class="clock">12:16 AM<br>10-May-18</button>
        <button class="note" aria-label="Notifications"><svg viewBox="0 0 16 16"><path d="M0 1h16v11H8l-3 3v-3H0z" fill="#fff" stroke="none" /><path d="M3 4.500h10M3 7.500h10M3 10h5" stroke="#000" /><circle cx="13" cy="12" r="3" fill="#fff" stroke="#000" stroke-width=".8" /></svg></button>
        <span class="peek"></span>
      </div>
    </footer>
  </div>
</template>

<style>
body { margin: 0; }
</style>

<style scoped>
.app { display: flex; flex-direction: column; min-height: 100vh; background: linear-gradient(90deg, #e1e9ef, #ecf3fc); font-family: "Open Sans", "Noto Sans", sans-serif; font-size: 12px; color: #111; overflow: hidden; }
.app * { box-sizing: border-box; }
button, input, select { font: inherit; color: inherit; border: 0; padding: 0; margin: 0; background: none; border-radius: 0; }
svg { display: block; flex: none; }
h1, h2, ul { margin: 0; padding: 0; font-weight: 400; list-style: none; }

.title { display: flex; align-items: center; height: 23px; background: #fff; padding: 0 2px 0 4px; font-family: "Noto Sans", sans-serif; }
.logo { width: 13px; height: 13px; }
h1 { font-size: 11px; margin-left: 6px; flex: 1; color: #000; }
.winbtns { display: flex; }
.winbtns button { width: 46px; height: 20px; display: grid; place-items: center; }
.winbtns svg { width: 12px; height: 12px; fill: none; stroke: #111; }
.menu { display: flex; height: 19px; background: #fff; border-bottom: 1px solid #eef0f2; font-family: "Noto Sans", sans-serif; }
.menu button { font-size: 11px; line-height: 19px; padding: 0 7px; }

.bars { display: flex; gap: 4px; padding-top: 1px; height: 28px; }
.bar { position: relative; display: flex; align-items: center; height: 26px; padding: 0 3px 0 10px; background: linear-gradient(#e7f3fa, #d3e8f3 45%, #b0d3e7); border-right: 1px solid #a5c6d9; }
.bar::before, .cell::before { content: ""; position: absolute; left: 3px; top: 2px; bottom: 0; width: 2px; background: repeating-linear-gradient(#a8b8c4 0 2px, #f6fbfe 2px 4px); }
.tool { display: grid; place-items: center; width: 22px; height: 21px; }
.tool svg { width: 16px; height: 16px; }
.tool.on { border: 1px solid #6b9cb9; background: #b9d8e9; }
.sep { width: 8px; height: 16px; background: linear-gradient(90deg, transparent 3px, #9ba7b0 3px 4px, #fff 4px 5px, transparent 5px); }
.combo { width: 113px; }
.combo select { appearance: none; width: 97px; height: 21px; padding: 0 4px; font-family: Roboto, sans-serif; font-size: 12px; background: #e2e3e4; border: 1px solid #a9adb0; }
.combo svg { position: absolute; right: 9px; width: 10px; height: 6px; pointer-events: none; }

.tabs { position: relative; height: 33px; border-bottom: 6px solid #b7d7e9; padding-top: 3px; }
.tabs::after { content: ""; position: absolute; left: 178px; right: 0; bottom: 0; height: 1px; background: #6f9fbc; }
.tabshape { position: absolute; left: 0; top: 3px; width: 179px; height: 25px; }
.tab { position: relative; display: flex; align-items: center; height: 24px; padding-left: 22px; width: 178px; }
.tabicon { width: 13px; height: 16px; }
.tabname { margin-left: 4px; font-family: "Liberation Sans", Arial, sans-serif; font-weight: 700; font-size: 12px; color: #23496a; white-space: nowrap; }
.tabclose { margin-left: 7px; }
.tabclose svg { width: 12px; height: 12px; }

.work { display: flex; flex: 1; align-items: stretch; padding: 1px 0 2px; }
.vbar { position: relative; align-self: flex-start; padding: 10px 0 3px; border-bottom: 1px solid #a5c6d9; background: linear-gradient(90deg, #e7f3fa, #cfe6f3 55%, #a9cfe5); }
.vbar::before { content: ""; position: absolute; top: 4px; left: 2px; right: 0; height: 2px; background: repeating-linear-gradient(90deg, #a8b8c4 0 2px, #f6fbfe 2px 4px); }
.modes { width: 28px; padding-left: 2px; }
.orient { width: 28px; padding-left: 4px; margin-right: 2px; }
.orient input { display: block; width: 24px; height: 15px; margin: 3px 0; background: #fff; font-size: 11px; padding-left: 1px; }
.vsep { display: block; width: 22px; height: 4px; background: linear-gradient(transparent 1px, #9ba7b0 1px 2px, #fff 2px 3px, transparent 3px); }

.side { display: flex; flex-direction: column; gap: 4px; width: 121px; font-family: "Liberation Sans", Arial, sans-serif; }
.overview { height: 101px; border: 2px solid #686868; border-width: 1px 2px 1px 1px; background: #fff; }
.overview svg { width: 100%; height: 100%; }
.devices { flex: 1; border: 2px solid #686868; border-width: 1px 2px 1px; background: #fff; }
.devhead { display: flex; align-items: center; gap: 4px; height: 24px; padding: 1px 1px; background: linear-gradient(#e9f4fa, #b9d9ea); border-bottom: 1px solid #777; }
.devhead button { width: 16px; height: 16px; border-radius: 3px; background: #0b55dc; color: #fff; font-weight: 700; font-size: 13px; line-height: 16px; }
.devhead h2 { font-size: 12px; flex: 1; text-align: center; }
.devices li button { display: block; width: 100%; height: 13px; line-height: 14px; padding-left: 2px; text-align: left; font-size: 11px; }
.devices li button.sel { background: #0078d7; color: #fff; }

.canvas { position: relative; flex: 1; margin-left: 4px; margin-right: 4px; border: 1px solid #666; background: #fff; overflow: hidden; min-height: 597px; box-shadow: -2px 0 #a9cbe0, 4px 0 #a9cbe0; }
.sheet { width: 100%; height: 100%; position: absolute; inset: 0; font-family: "Liberation Sans", Arial, sans-serif; }
.wire { fill: none; stroke: #004000; }
.pin { fill: none; stroke: #800000; }
.body { fill: #c8c8aa; stroke: #800000; }
.term { fill: #fff; stroke: #004000; }
.dot { fill: #004000; shape-rendering: geometricPrecision; }
.over { stroke: #333; }
.small { font-size: 7px; fill: #222; }
.mid { font-size: 9px; fill: #111; }
.big { font-size: 13px; fill: #800000; text-anchor: middle; }
.watermark { position: absolute; right: 52px; bottom: 5px; width: 236px; display: flex; flex-direction: column; color: #a9a9a9cc; white-space: nowrap; }
.watermark strong { font-weight: 400; font-size: 19px; line-height: 24px; }
.watermark span { font-size: 14px; line-height: 20px; }

.status { display: flex; gap: 4px; height: 25px; font-family: "Liberation Sans", Arial, sans-serif; font-size: 11px; }
.cell { position: relative; display: flex; align-items: center; background: linear-gradient(#ecf6fb, #d4e9f4 45%, #aed4ea); border-right: 1px solid #a5c6d9; padding-left: 11px; white-space: nowrap; }
.runs { width: 258px; }
.runs button { width: 36px; display: grid; place-items: center; }
.runs svg { width: 16px; height: 16px; }
.runs .msgs { display: flex; align-items: center; gap: 6px; width: auto; margin-left: 7px; font-family: Roboto, sans-serif; }
.runs .msgs svg { width: 14px; height: 14px; }
.paused { flex: 408 1 0; padding-left: 14px; color: #804000; }
.coords { flex: 688 1 0; border-right: 0; margin-left: 2px; padding-right: 2px; justify-content: flex-end; }
.coords span:nth-child(2) { margin-left: 288px; margin-right: 16px; }
.coords em { font-style: normal; color: #000090; }

.taskbar { display: flex; height: 40px; background: #020507; color: #fff; }
.start { width: 48px; display: grid; place-items: center; }
.start svg { width: 16px; height: 16px; }
.search { display: flex; align-items: center; width: 344px; background: #f2f2f2; padding: 0 14px 0 8px; color: #333; }
.ring { width: 22px; height: 22px; }
.search input { flex: 1; min-width: 0; margin-left: 10px; font-size: 14px; outline: 0; }
.search input::placeholder { color: #333; opacity: 1; }
.mic { width: 12px; height: 18px; }
.apps { display: flex; gap: 1px; }
.apps button { position: relative; width: 48px; display: grid; place-items: center; }
.apps .tv { width: 50px; }
.apps svg { width: 22px; height: 22px; }
.apps .ps span { width: 22px; height: 20px; border: 1px solid #8fc4ff; background: #071c46; color: #9bd0ff; font-size: 13px; line-height: 17px; font-weight: 600; text-align: center; }
.apps .run::after { content: ""; position: absolute; left: 4px; right: 4px; bottom: 0; height: 2px; background: #9fd0f5; }
.apps .active { background: #333a40; }
.apps .active::after { left: 0; right: 0; }
.tray { display: flex; margin-left: auto; }
.tray button { width: 23px; display: grid; place-items: center; }
.tray svg { width: 16px; height: 16px; fill: none; stroke: #fff; }
.tray .people { width: 32px; }
.tray .chev { width: 34px; padding-left: 6px; }
.tray .eng { width: 36px; font-size: 12px; }
.tray .clock { width: 68px; font-size: 12px; line-height: 18px; white-space: nowrap; text-align: center; }
.tray .note { width: 36px; }
.peek { width: 5px; margin-left: 10px; border-left: 1px solid #555; }
</style>
